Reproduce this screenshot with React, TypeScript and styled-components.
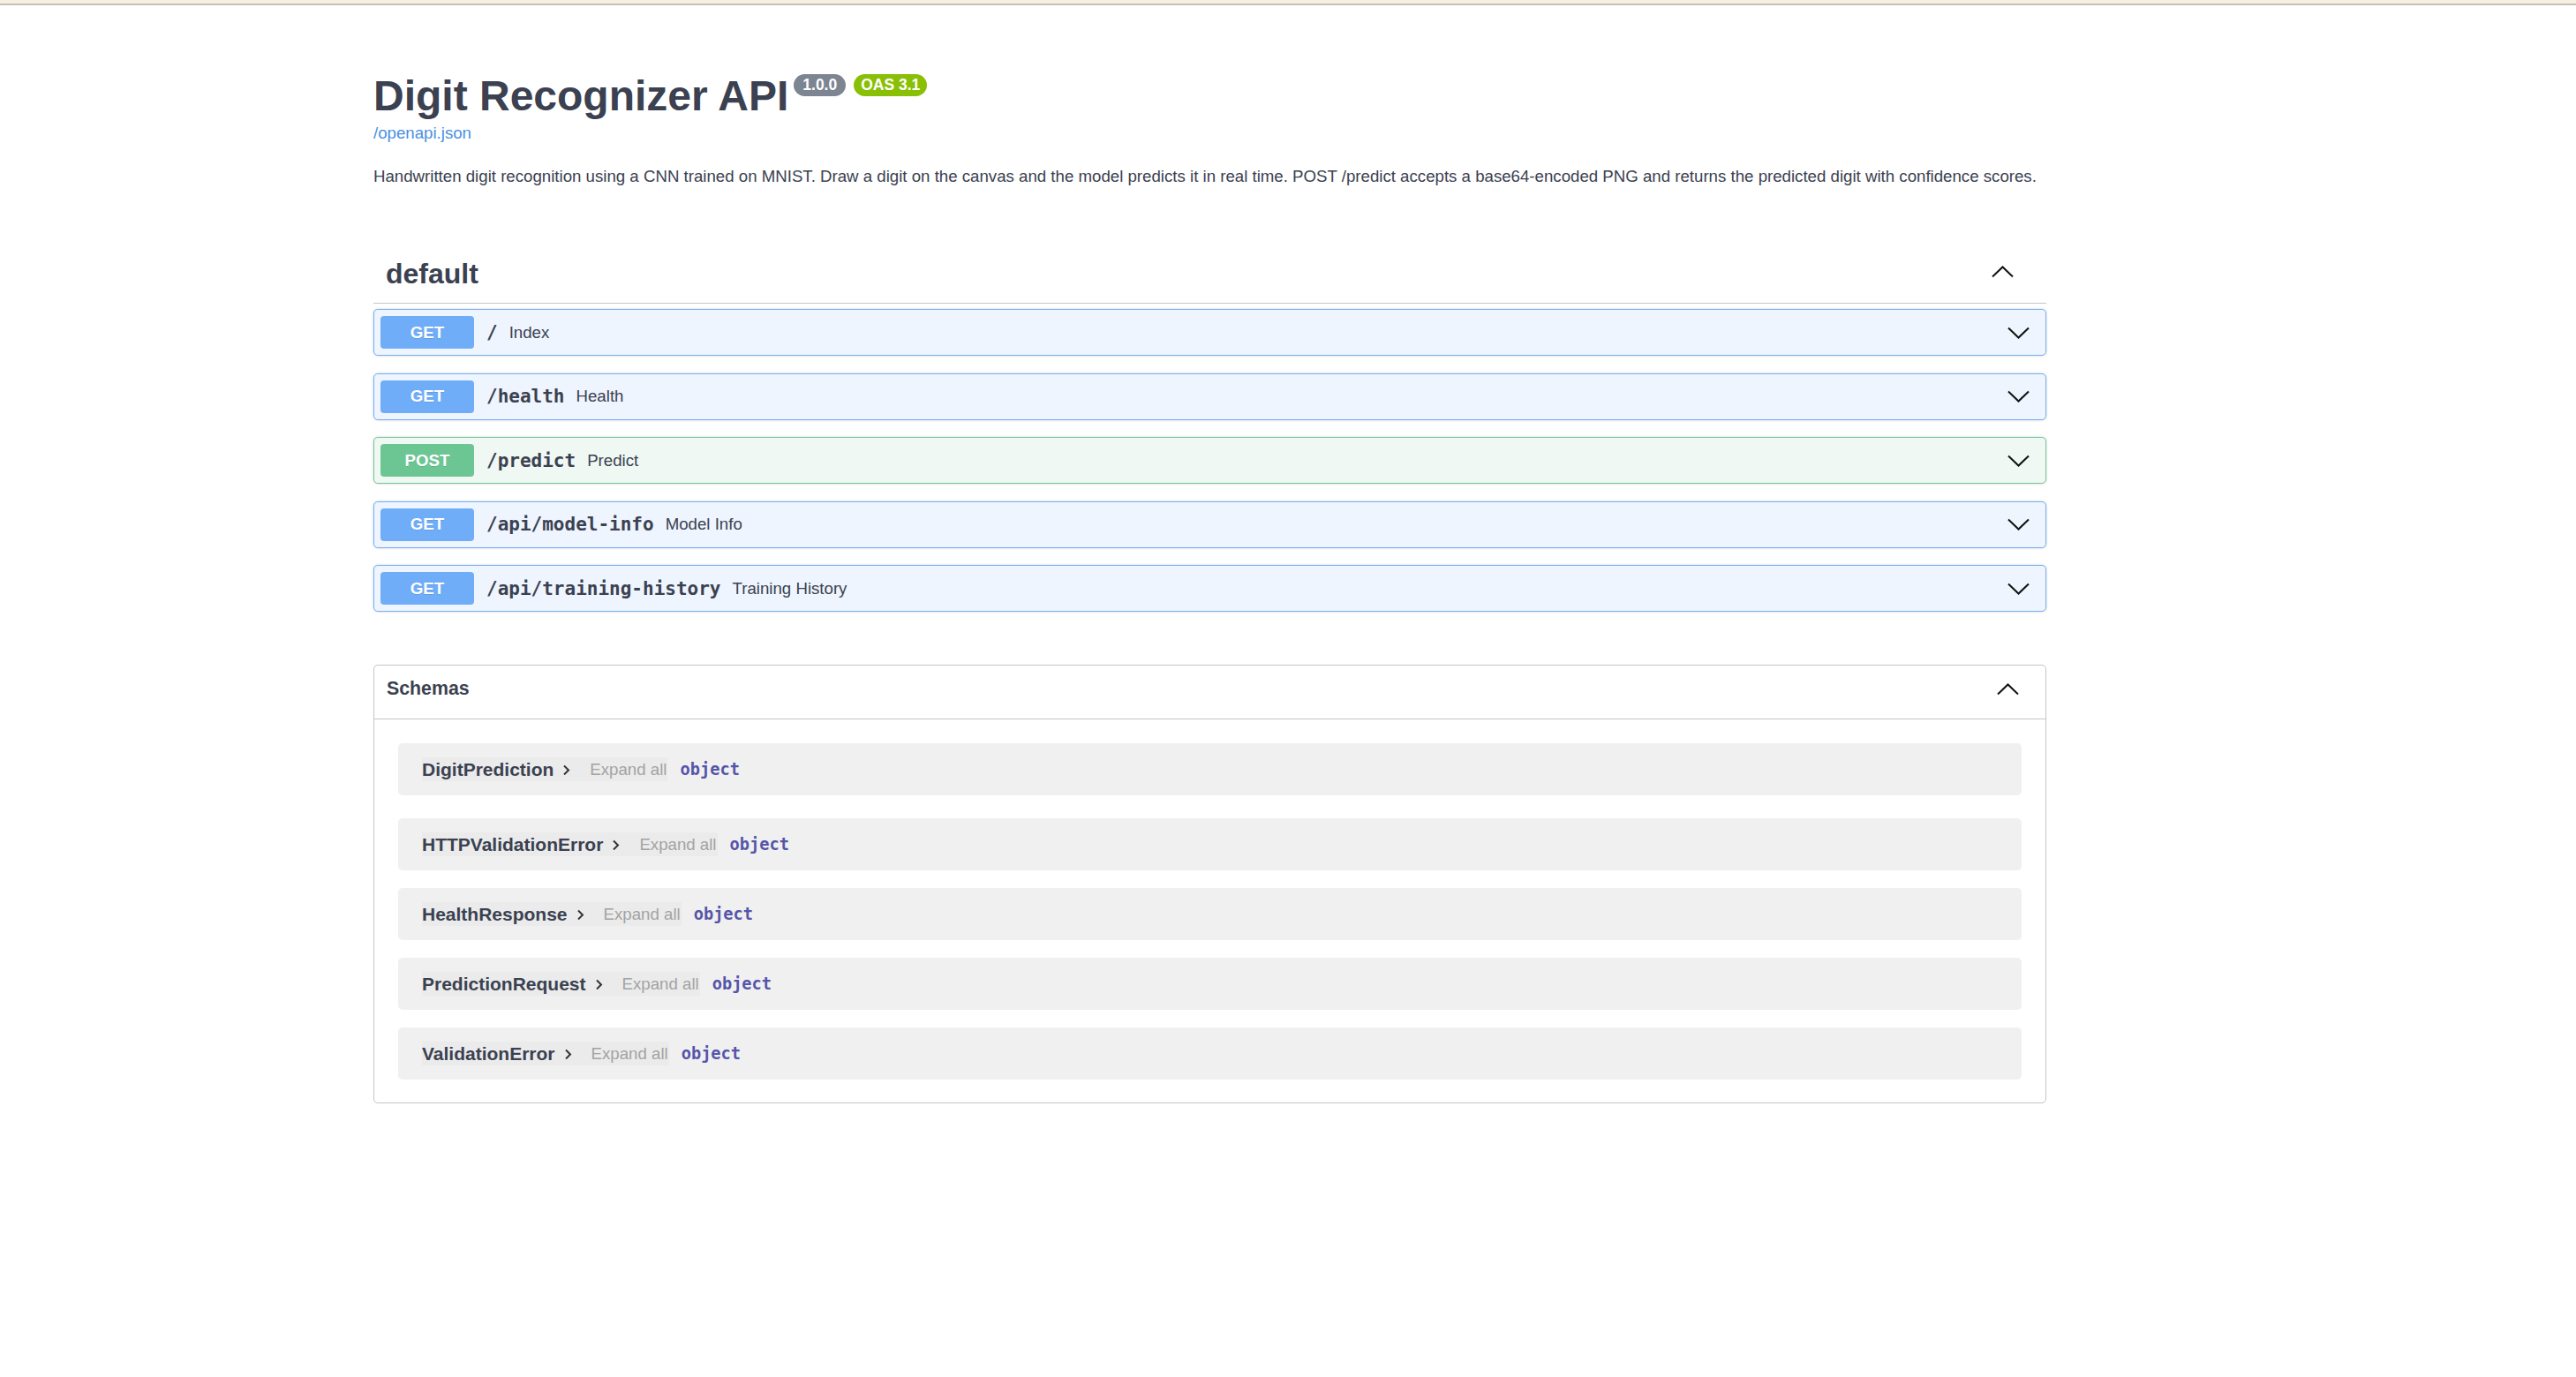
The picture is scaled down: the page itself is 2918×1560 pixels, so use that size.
import React, { FC } from "react";
import styled, { createGlobalStyle } from "styled-components";

const GlobalStyle = createGlobalStyle`
  body {
    margin: 0;
    background: #ffffff;
    font-family: "Liberation Sans", Arial, sans-serif;
    color: #3b4151;
  }
`;

const TopBar = styled.div`
  height: 4px;
  background: #f7efe1;
  border-bottom: 2px solid #c3c0b6;
`;

const Wrapper = styled.div`
  width: 1895px;
  margin: 0 0 0 423px;
  padding-bottom: 200px;
`;

const Info = styled.div`
  margin-top: 76px;
`;

const TitleRow = styled.div`
  display: flex;
  align-items: flex-start;
  height: 54px;
`;

const Title = styled.h2`
  margin: 0;
  font-size: 48px;
  line-height: 54px;
  font-weight: 700;
  color: #3b4151;
`;

const Badge = styled.span<{ $bg: string; $pad: number }>`
  margin: 2px 0 0 6px;
  height: 25px;
  line-height: 25px;
  padding: 0 ${(p) => p.$pad}px;
  border-radius: 13px;
  background: ${(p) => p.$bg};
  color: #ffffff;
  font-size: 17.5px;
  font-weight: 700;
  & + & {
    margin-left: 9px;
  }
`;

const SpecLink = styled.a`
  display: block;
  margin-top: 4px;
  font-size: 18.67px;
  line-height: 22px;
  color: #4990e2;
  text-decoration: none;
`;

const Description = styled.p`
  margin: 27px 0 0;
  font-size: 18.67px;
  line-height: 22px;
  color: #3b4151;
`;

const SectionHeader = styled.div`
  margin-top: 79px;
  display: flex;
  align-items: center;
  justify-content: space-between;
  padding: 0 37px 13px 14px;
  border-bottom: 1px solid rgba(59, 65, 81, 0.3);
`;

const SectionTitle = styled.h3`
  margin: 0;
  font-size: 32px;
  line-height: 40px;
  font-weight: 700;
  color: #3b4151;
`;

const ArrowIcon = styled.svg<{ $shift?: number }>`
  display: block;
  flex: none;
  margin-top: ${(p) => p.$shift ?? 0}px;
`;

const OpList = styled.div`
  padding-top: 6px;
`;

const OpBlock = styled.div<{ $border: string; $bg: string }>`
  display: flex;
  align-items: center;
  padding: 7px 18px 7px 7px;
  border: 1px solid ${(p) => p.$border};
  border-radius: 5px;
  background: ${(p) => p.$bg};
  box-shadow: 0 0 3px rgba(0, 0, 0, 0.19);
  margin-bottom: 19.5px;
  &:last-child {
    margin-bottom: 0;
  }
`;

const MethodBadge = styled.span<{ $bg: string }>`
  display: flex;
  align-items: center;
  justify-content: center;
  flex: none;
  width: 106px;
  height: 37px;
  border-radius: 4px;
  background: ${(p) => p.$bg};
  color: #ffffff;
  font-size: 18.67px;
  font-weight: 700;
  text-shadow: 0 1px 0 rgba(0, 0, 0, 0.1);
`;

const OpPath = styled.span`
  padding-left: 14px;
  font-family: "DejaVu Sans Mono", monospace;
  font-size: 21px;
  font-weight: 700;
  color: #3b4151;
`;

const OpSummary = styled.span`
  flex: 1;
  padding-left: 13px;
  font-size: 18.67px;
  color: #3b4151;
`;

const SchemasBox = styled.section`
  margin-top: 60px;
  border: 1px solid rgba(59, 65, 81, 0.3);
  border-radius: 5px;
`;

const SchemasHeader = styled.div`
  display: flex;
  align-items: flex-start;
  justify-content: space-between;
  padding: 14px 30px 22px 14px;
  border-bottom: 1px solid rgba(59, 65, 81, 0.3);
`;

const SchemasTitle = styled.h4`
  margin: 0;
  font-size: 21.33px;
  line-height: 24px;
  font-weight: 700;
  color: #3b4151;
`;

const SchemaList = styled.div`
  padding: 27px 27px 26px;
`;

const SchemaRow = styled.div`
  display: flex;
  align-items: center;
  height: 59px;
  padding-left: 27px;
  border-radius: 5px;
  background: #f0f0f0;
  margin-bottom: 20px;
  &:first-child {
    margin-bottom: 26px;
  }
  &:last-child {
    margin-bottom: 0;
  }
`;

const NameBox = styled.span`
  display: flex;
  align-items: center;
  gap: 10px;
  height: 27px;
  padding-right: 13px;
  background: rgba(0, 0, 0, 0.02);
`;

const SchemaName = styled.span`
  font-size: 21px;
  font-weight: 700;
  color: #3b4151;
`;

const ExpandAll = styled.span`
  display: flex;
  align-items: center;
  height: 27px;
  padding: 0 1px 0 9px;
  background: rgba(0, 0, 0, 0.02);
  font-size: 18.67px;
  color: #a3a3a3;
`;

const ObjectType = styled.span`
  margin-left: 14px;
  font-family: "DejaVu Sans Mono", monospace;
  font-size: 18.67px;
  font-weight: 700;
  color: #55a;
`;

const ChevronDown: FC = () => (
  <ArrowIcon width="25" height="14" viewBox="0 0 25 14">
    <polyline points="1,1.5 12.5,12.5 24,1.5" fill="none" stroke="#111" strokeWidth="2" />
  </ArrowIcon>
);

const ChevronUp: FC<{ shift?: number }> = ({ shift }) => (
  <ArrowIcon $shift={shift} width="25" height="14" viewBox="0 0 25 14">
    <polyline points="1,12.5 12.5,1.5 24,12.5" fill="none" stroke="#111" strokeWidth="2" />
  </ArrowIcon>
);

const ChevronRight: FC = () => (
  <ArrowIcon width="9" height="12" viewBox="0 0 9 12">
    <polyline points="2,1.5 7,6.5 2,11.5" fill="none" stroke="#333" strokeWidth="2" />
  </ArrowIcon>
);

const methodColors: Record<string, { badge: string; border: string; bg: string }> = {
  GET: { badge: "#6fadf9", border: "#74b0f8", bg: "#eef5fe" },
  POST: { badge: "#6cc693", border: "#72c898", bg: "#eff8f3" },
};

const operations = [
  { method: "GET", path: "/", summary: "Index" },
  { method: "GET", path: "/health", summary: "Health" },
  { method: "POST", path: "/predict", summary: "Predict" },
  { method: "GET", path: "/api/model-info", summary: "Model Info" },
  { method: "GET", path: "/api/training-history", summary: "Training History" },
];

const schemas = [
  "DigitPrediction",
  "HTTPValidationError",
  "HealthResponse",
  "PredictionRequest",
  "ValidationError",
];

const App: FC = (): JSX.Element => {
  return (
    <>
      <GlobalStyle />
      <TopBar />
      <Wrapper>
        <Info>
          <TitleRow>
            <Title>Digit Recognizer API</Title>
            <Badge $bg="#7d8492" $pad={10}>1.0.0</Badge>
            <Badge $bg="#89bf04" $pad={8}>OAS 3.1</Badge>
          </TitleRow>
          <SpecLink href="#">/openapi.json</SpecLink>
          <Description>
            Handwritten digit recognition using a CNN trained on MNIST. Draw a digit on the canvas and
            the model predicts it in real time. POST /predict accepts a base64-encoded PNG and returns
            the predicted digit with confidence scores.
          </Description>
        </Info>

        <SectionHeader>
          <SectionTitle>default</SectionTitle>
          <ChevronUp shift={-4} />
        </SectionHeader>
        <OpList>
          {operations.map((op) => {
            const c = methodColors[op.method];
            return (
              <OpBlock key={op.path} $border={c.border} $bg={c.bg}>
                <MethodBadge $bg={c.badge}>{op.method}</MethodBadge>
                <OpPath>{op.path}</OpPath>
                <OpSummary>{op.summary}</OpSummary>
                <ChevronDown />
              </OpBlock>
            );
          })}
        </OpList>

        <SchemasBox>
          <SchemasHeader>
            <SchemasTitle>Schemas</SchemasTitle>
            <ChevronUp shift={6} />
          </SchemasHeader>
          <SchemaList>
            {schemas.map((name) => (
              <SchemaRow key={name}>
                <NameBox>
                  <SchemaName>{name}</SchemaName>
                  <ChevronRight />
                </NameBox>
                <ExpandAll>Expand all</ExpandAll>
                <ObjectType>object</ObjectType>
              </SchemaRow>
            ))}
          </SchemaList>
        </SchemasBox>
      </Wrapper>
    </>
  );
};

export default App;
